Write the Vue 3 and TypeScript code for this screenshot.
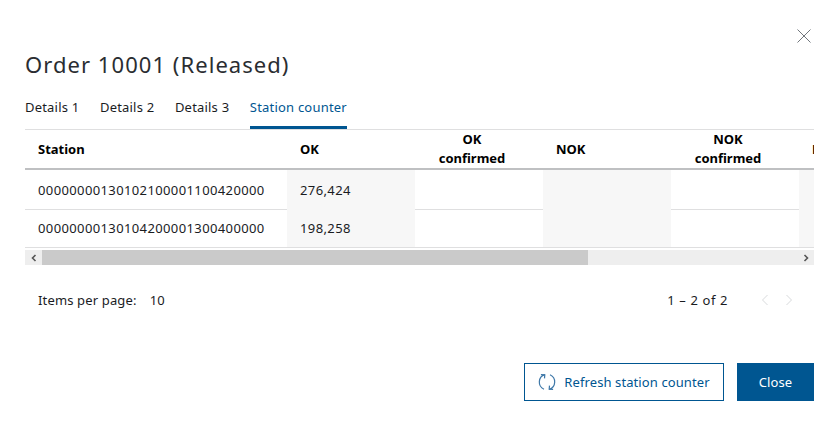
<script setup lang="ts">
const tabs = ['Details 1', 'Details 2', 'Details 3', 'Station counter']
const rows = [
  { station: '00000000130102100001100420000', ok: '276,424' },
  { station: '00000000130104200001300400000', ok: '198,258' },
]
</script>

<template>
  <div class="dialog">
    <button class="close" aria-label="Close">
      <svg width="14" height="14" viewBox="0 0 14 14"><path d="M.5.5l13 13M13.5.5l-13 13" stroke="#71767c" stroke-width="1" fill="none" /></svg>
    </button>
    <h1 class="title">Order 10001 (Released)</h1>
    <nav class="tabs">
      <span v-for="(t, i) in tabs" :key="t" class="tab" :class="{ active: i === 3 }">{{ t }}</span>
    </nav>
    <div class="table-wrap">
      <div class="table">
        <div class="row head">
          <div class="cell c-station">Station</div>
          <div class="cell c-num">OK</div>
          <div class="cell c-num center">OK<br />confirmed</div>
          <div class="cell c-num">NOK</div>
          <div class="cell c-num center">NOK<br />confirmed</div>
          <div class="cell c-num">Last</div>
        </div>
        <div v-for="r in rows" :key="r.station" class="row body">
          <div class="cell c-station">{{ r.station }}</div>
          <div class="cell c-num shade">{{ r.ok }}</div>
          <div class="cell c-num"></div>
          <div class="cell c-num shade"></div>
          <div class="cell c-num"></div>
          <div class="cell c-num shade"></div>
        </div>
      </div>
    </div>
    <div class="scrollbar">
      <span class="arrow"><svg width="8" height="8" viewBox="0 0 8 8"><path d="M5.5 1L2.5 4l3 3" stroke="#555" stroke-width="1.6" fill="none" /></svg></span>
      <span class="thumb"></span>
      <span class="rest"></span>
      <span class="arrow"><svg width="8" height="8" viewBox="0 0 8 8"><path d="M2.5 1l3 3-3 3" stroke="#555" stroke-width="1.6" fill="none" /></svg></span>
    </div>
    <div class="pager">
      <span class="per">Items per page:</span>
      <span class="size">10</span>
      <span class="range">1 – 2 of 2</span>
      <svg class="nav" width="8" height="12" viewBox="0 0 8 12"><path d="M6.5 1L1.5 6l5 5" stroke="#d8dadc" fill="none" /></svg>
      <svg class="nav next" width="8" height="12" viewBox="0 0 8 12"><path d="M1.5 1l5 5-5 5" stroke="#d8dadc" fill="none" /></svg>
    </div>
    <div class="actions">
      <button class="btn outline">
        <svg width="18" height="18" viewBox="0 0 18 18" fill="none" stroke="#3f78a8" stroke-width="1.2">
          <path d="M6.8 1.6A7.8 7.8 0 0 0 6 16.2" />
          <path d="M11.2 16.4A7.8 7.8 0 0 0 12 1.8" />
          <path d="M2.9 1.6l3.9.2-.3 3.6" />
          <path d="M15.1 16.4l-3.9-.2.3-3.6" />
        </svg>
        Refresh station counter
      </button>
      <button class="btn solid">Close</button>
    </div>
  </div>
</template>

<style scoped>
.dialog {
  position: relative;
  width: 837px;
  height: 428px;
  box-sizing: border-box;
  padding: 50px 23px 0 25px;
  font-family: "Noto Sans", sans-serif;
  font-size: 13px;
  color: #1a1c1f;
  background: #fff;
  overflow: hidden;
}
.close {
  position: absolute;
  top: 29px;
  right: 26px;
  padding: 0;
  border: 0;
  background: none;
  line-height: 0;
}
.title {
  margin: 0;
  height: 29px;
  font-size: 22px;
  line-height: 29px;
  font-weight: 400;
  letter-spacing: 1.05px;
  color: #2a2d31;
}
.tabs {
  display: flex;
  gap: 20.6px;
  height: 51px;
  box-sizing: border-box;
  padding-top: 18px;
  border-bottom: 1px solid #dfdfe0;
}
.tab {
  position: relative;
  height: 32px;
  line-height: 20px;
  letter-spacing: 0.2px;
}
.tab.active {
  color: #005691;
  border-bottom: 3px solid #005691;
  height: 29px;
}
.table-wrap {
  overflow: hidden;
}
.table {
  width: 918px;
}
.row {
  display: grid;
  grid-template-columns: 262px repeat(5, 128px);
}
.head {
  height: 40px;
  box-sizing: border-box;
  border-bottom: 2px solid #bfc0c2;
  font-weight: 700;
  line-height: 19px;
  color: #000;
}
.body {
  height: 40px;
  box-sizing: border-box;
  border-bottom: 1px solid #dfdfe0;
  line-height: 40px;
  letter-spacing: 0.38px;
}
.body + .body {
  height: 38px;
  line-height: 37px;
}
.cell {
  padding: 0 13px;
  box-sizing: border-box;
  white-space: nowrap;
}
.head .cell {
  display: flex;
  align-items: center;
}
.head .center {
  justify-content: center;
  padding-right: 27px;
  text-align: center;
}
.shade {
  background: #f7f7f7;
}
.scrollbar {
  display: flex;
  height: 15px;
  margin-top: 2px;
  background: #eee;
}
.arrow {
  flex: 0 0 17px;
  display: flex;
  align-items: center;
  justify-content: center;
}
.thumb {
  flex: 0 0 546px;
  background: #cacaca;
}
.rest {
  flex: 1;
}
.pager {
  display: flex;
  align-items: center;
  height: 20px;
  margin-top: 25px;
  padding-left: 13px;
  letter-spacing: 0.15px;
}
.size {
  margin-left: 13px;
}
.range {
  margin-left: auto;
  margin-right: 33px;
  letter-spacing: 0.6px;
}
.nav.next {
  margin-left: 16px;
  margin-right: 21px;
}
.actions {
  display: flex;
  justify-content: flex-end;
  gap: 13px;
  margin-top: 53px;
}
.btn {
  height: 38px;
  box-sizing: border-box;
  font: inherit;
  border: 1px solid #005691;
  display: flex;
  align-items: center;
  justify-content: center;
  letter-spacing: 0.1px;
}
.outline {
  width: 200px;
  gap: 8px;
  background: #fff;
  color: #005691;
}
.solid {
  width: 77px;
  background: #005691;
  color: #fff;
}
</style>
